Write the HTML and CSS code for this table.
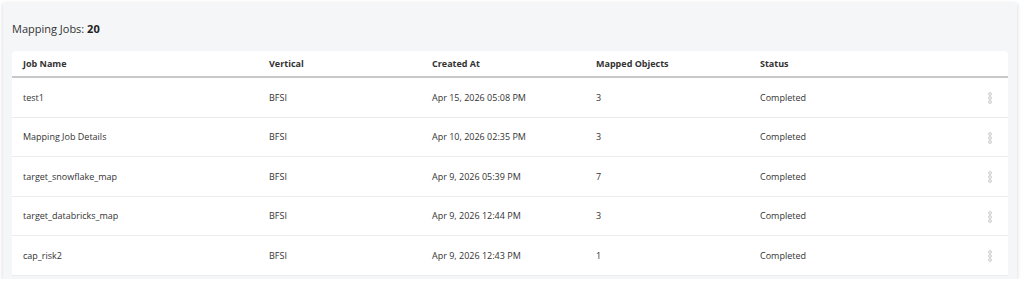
FILE: index.html
```html
<!DOCTYPE html>
<html>
<head>
<meta charset="utf-8">
<link rel="stylesheet" href="styles.css">
</head>
<body>
<div class="card">
  <div class="title">Mapping Jobs: <b>20</b></div>
  <table class="jobs">
    <thead>
      <tr>
        <th class="c1">Job Name</th>
        <th class="c2">Vertical</th>
        <th class="c3">Created At</th>
        <th class="c4">Mapped Objects</th>
        <th class="c5">Status</th>
        <th class="c6"></th>
      </tr>
    </thead>
    <tbody>
      <tr><td>test1</td><td>BFSI</td><td>Apr 15, 2026 05:08 PM</td><td>3</td><td>Completed</td><td class="act"><span class="kebab"><i></i><i></i><i></i></span></td></tr>
      <tr><td>Mapping Job Details</td><td>BFSI</td><td>Apr 10, 2026 02:35 PM</td><td>3</td><td>Completed</td><td class="act"><span class="kebab"><i></i><i></i><i></i></span></td></tr>
      <tr><td>target_snowflake_map</td><td>BFSI</td><td>Apr 9, 2026 05:39 PM</td><td>7</td><td>Completed</td><td class="act"><span class="kebab"><i></i><i></i><i></i></span></td></tr>
      <tr><td>target_databricks_map</td><td>BFSI</td><td>Apr 9, 2026 12:44 PM</td><td>3</td><td>Completed</td><td class="act"><span class="kebab"><i></i><i></i><i></i></span></td></tr>
      <tr><td>cap_risk2</td><td>BFSI</td><td>Apr 9, 2026 12:43 PM</td><td>1</td><td>Completed</td><td class="act"><span class="kebab"><i></i><i></i><i></i></span></td></tr>
    </tbody>
  </table>
</div>
</body>
</html>
```
FILE: styles.css
```css
html, body {
  margin: 0;
  padding: 0;
  background: #ffffff;
  font-family: "Open Sans", "Noto Sans", sans-serif;
  color: #333;
}
.card {
  margin: 3px 7px 0 3px;
  height: 276px;
  box-sizing: border-box;
  background: #f5f6f8;
  box-shadow: 0 1px 4px rgba(0,0,0,0.18);
  padding: 19px 9px 0 9px;
  overflow: hidden;
}
.title {
  font-size: 11px;
  line-height: 14px;
  color: #333;
  height: 29px;
}
.title b {
  font-weight: 700;
  color: #222;
}
.jobs {
  width: 100%;
  border-collapse: collapse;
  background: #fff;
  border-radius: 4px;
  font-size: 9px;
  table-layout: fixed;
}
.jobs th {
  text-align: left;
  font-weight: 700;
  color: #333;
  height: 25px;
  padding: 0 11px;
  border-bottom: 2px solid #c8c8c8;
}
.jobs td {
  height: 38.5px;
  padding: 0 11px;
  border-bottom: 1px solid #ececec;
  color: #333;
}
.c1 { width: 224px; }
.c2 { width: 141px; }
.c3 { width: 142px; }
.c4 { width: 142px; }
.c5 { width: 190px; }
.jobs td.act {
  text-align: right;
  padding-right: 16px;
}
.kebab {
  display: inline-flex;
  flex-direction: column;
  gap: 0;
  vertical-align: middle;
}
.kebab i {
  display: block;
  width: 2px;
  height: 2px;
  border-radius: 50%;
  border: 1px solid #d2d2d2;
  background: #ececec;
}
```
